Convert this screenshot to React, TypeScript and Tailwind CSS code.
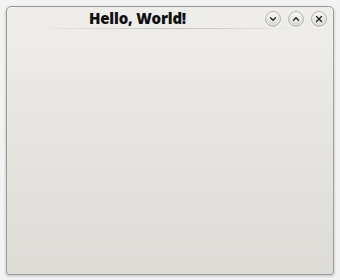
import { ChevronDown, ChevronUp, X } from "lucide-react";

function WinButton({ children }: { children: React.ReactNode }) {
	return (
		<div className="flex h-[16px] w-[16px] items-center justify-center rounded-full border border-[#b4b4b0] bg-gradient-to-b from-[#f8f8f6] to-[#d6d6d2] text-[#1e2224] shadow-[0_1px_0_rgba(255,255,255,0.8)]">
			{children}
		</div>
	);
}

export default function App() {
	return (
		<div className="h-[280px] w-[340px] bg-[#f3f3f3] p-[6px] pb-[5px]">
			<div className="flex h-full flex-col rounded-t-[5px] rounded-b-[3px] border border-[#9c9c9a] bg-gradient-to-b from-[#efeeeb] to-[#dcdbd6] shadow-[0_1px_3px_rgba(0,0,0,0.25)]">
				{/* Title bar */}
				<div className="relative flex h-[21px] items-center">
					<span
						className="absolute left-[82px] top-[1px] text-[15px] font-extrabold leading-[20px] tracking-[-0.2px] text-[#101010]"
						style={{ fontFamily: '"Open Sans", sans-serif' }}
					>
						Hello, World!
					</span>
					<div className="ml-auto mr-[6px] mt-[2px] flex gap-[7px]">
						<WinButton>
							<ChevronDown size={10} strokeWidth={3} />
						</WinButton>
						<WinButton>
							<ChevronUp size={10} strokeWidth={3} />
						</WinButton>
						<WinButton>
							<X size={10} strokeWidth={3} />
						</WinButton>
					</div>
				</div>
				<div className="mx-[28px] h-px bg-gradient-to-r from-transparent via-[#c2c2be] to-transparent" />
				<div className="flex-1" />
			</div>
		</div>
	);
}
